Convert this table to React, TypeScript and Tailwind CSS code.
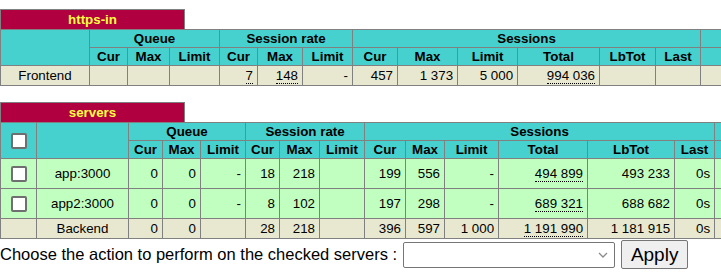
import React from "react";

const TITLE_BG = "bg-[#b00040]";
const HEAD_BG = "bg-[#46d1cf]";

function U({ children }: { children: React.ReactNode }) {
  return <span className="border-b border-dotted border-black leading-[14px] inline-block">{children}</span>;
}

function Box() {
  return (
    <div className="mx-auto w-[16px] h-[16px] border-2 border-[#6f6f6f] bg-white rounded-[2px]" />
  );
}

const th = "border border-[#808080] font-bold text-center px-[3px] whitespace-nowrap";
const td = "border border-[#808080] text-right px-[4px] whitespace-nowrap";

function Title({ name }: { name: string }) {
  return (
    <div
      className={`w-[185px] h-[20px] ${TITLE_BG} text-[#ffff40] font-bold text-[13.33px] leading-[19px] text-center border border-b-0 border-[#808080]`}
    >
      {name}
    </div>
  );
}

function Frontend() {
  const widths = [89, 38, 42, 50, 38, 45, 50, 45, 60, 60, 82, 56, 45, 140];
  return (
    <div>
      <Title name="https-in" />
      <table className="table-fixed border-collapse text-[13.33px]" style={{ width: widths.reduce((a, b) => a + b, 0) }}>
        <colgroup>
          {widths.map((w, i) => (
            <col key={i} style={{ width: w }} />
          ))}
        </colgroup>
        <tbody>
          <tr className={`${HEAD_BG} h-[18px] leading-[15px]`}>
            <th className={th} rowSpan={2}></th>
            <th className={th} colSpan={3}>Queue</th>
            <th className={th} colSpan={3}>Session rate</th>
            <th className={th} colSpan={6}>Sessions</th>
            <th className={th}></th>
          </tr>
          <tr className={`${HEAD_BG} h-[18px] leading-[15px]`}>
            <th className={th}>Cur</th>
            <th className={th}>Max</th>
            <th className={th}>Limit</th>
            <th className={th}>Cur</th>
            <th className={th}>Max</th>
            <th className={th}>Limit</th>
            <th className={th}>Cur</th>
            <th className={th}>Max</th>
            <th className={th}>Limit</th>
            <th className={th}>Total</th>
            <th className={th}>LbTot</th>
            <th className={th}>Last</th>
            <th className={th}></th>
          </tr>
          <tr className="bg-[#e8e8d0] h-[20px] leading-[15px]">
            <td className={`${td} !text-center`}>Frontend</td>
            <td className={td}></td>
            <td className={td}></td>
            <td className={td}></td>
            <td className={td}><U>7</U></td>
            <td className={td}><U>148</U></td>
            <td className={td}>-</td>
            <td className={td}>457</td>
            <td className={td}>1 373</td>
            <td className={td}>5 000</td>
            <td className={td}><U>994 036</U></td>
            <td className={td}></td>
            <td className={td}></td>
            <td className={td}></td>
          </tr>
        </tbody>
      </table>
    </div>
  );
}

type Row = {
  name: string;
  q: [string, string, string];
  sr: [string, string, string];
  s: [string, string, string, string, string, string];
  backend?: boolean;
};

const rows: Row[] = [
  { name: "app:3000", q: ["0", "0", "-"], sr: ["18", "218", ""], s: ["199", "556", "-", "494 899", "493 233", "0s"] },
  { name: "app2:3000", q: ["0", "0", "-"], sr: ["8", "102", ""], s: ["197", "298", "-", "689 321", "688 682", "0s"] },
  { name: "Backend", q: ["0", "0", ""], sr: ["28", "218", ""], s: ["396", "597", "1 000", "1 191 990", "1 181 915", "0s"], backend: true },
];

function Backend() {
  const widths = [36, 92, 34, 38, 45, 34, 40, 45, 41, 39, 54, 89, 87, 40, 140];
  return (
    <div>
      <Title name="servers" />
      <table className="table-fixed border-collapse text-[13.33px]" style={{ width: widths.reduce((a, b) => a + b, 0) }}>
        <colgroup>
          {widths.map((w, i) => (
            <col key={i} style={{ width: w }} />
          ))}
        </colgroup>
        <tbody>
          <tr className={`${HEAD_BG} h-[18px] leading-[15px]`}>
            <th className={th} rowSpan={2}>
              <Box />
            </th>
            <th className={th} rowSpan={2}></th>
            <th className={th} colSpan={3}>Queue</th>
            <th className={th} colSpan={3}>Session rate</th>
            <th className={th} colSpan={6}>Sessions</th>
            <th className={th}></th>
          </tr>
          <tr className={`${HEAD_BG} h-[18px] leading-[15px]`}>
            <th className={th}>Cur</th>
            <th className={th}>Max</th>
            <th className={th}>Limit</th>
            <th className={th}>Cur</th>
            <th className={th}>Max</th>
            <th className={th}>Limit</th>
            <th className={th}>Cur</th>
            <th className={th}>Max</th>
            <th className={th}>Limit</th>
            <th className={th}>Total</th>
            <th className={th}>LbTot</th>
            <th className={th}>Last</th>
            <th className={th}></th>
          </tr>
          {rows.map((r) => (
            <tr
              key={r.name}
              className={`${r.backend ? "bg-[#e8e8d0] h-[20px]" : "bg-[#c0ffc0] h-[30px]"} leading-[15px]`}
            >
              <td className={`${td} !text-center`}>{r.backend ? null : <Box />}</td>
              <td className={`${td} !text-center`}>{r.name}</td>
              <td className={td}>{r.q[0]}</td>
              <td className={td}>{r.q[1]}</td>
              <td className={td}>{r.q[2]}</td>
              <td className={td}>{r.sr[0]}</td>
              <td className={td}>{r.sr[1]}</td>
              <td className={td}>{r.sr[2]}</td>
              <td className={td}>{r.s[0]}</td>
              <td className={td}>{r.s[1]}</td>
              <td className={td}>{r.s[2]}</td>
              <td className={td}><U>{r.s[3]}</U></td>
              <td className={td}>{r.s[4]}</td>
              <td className={td}>{r.s[5]}</td>
              <td className={td}></td>
            </tr>
          ))}
        </tbody>
      </table>
    </div>
  );
}

export default function App() {
  return (
    <div
      className="w-[721px] h-[275px] overflow-hidden bg-white text-black"
      style={{ fontFamily: '"Liberation Sans", Arial, Helvetica, sans-serif' }}
    >
      <div className="pt-[9px]">
        <Frontend />
      </div>
      <div className="pt-[16px]">
        <Backend />
      </div>
      <div className="flex items-center mt-[1px] text-[16.5px]">
        <span className="whitespace-nowrap">Choose the action to perform on the checked servers :</span>
        <div className="ml-[6px] w-[212px] h-[26px] bg-white border border-[#767676] rounded-[2px] flex items-center justify-end pr-[6px]">
          <svg width="10" height="6" viewBox="0 0 10 6" fill="none">
            <path d="M1 1l4 4 4-4" stroke="#8a8a8a" strokeWidth="1.3" />
          </svg>
        </div>
        <button className="ml-[6px] w-[67px] h-[29px] bg-[#efefef] border border-[#767676] rounded-[2px] text-[19px] leading-[20px] text-black">
          Apply
        </button>
      </div>
    </div>
  );
}
